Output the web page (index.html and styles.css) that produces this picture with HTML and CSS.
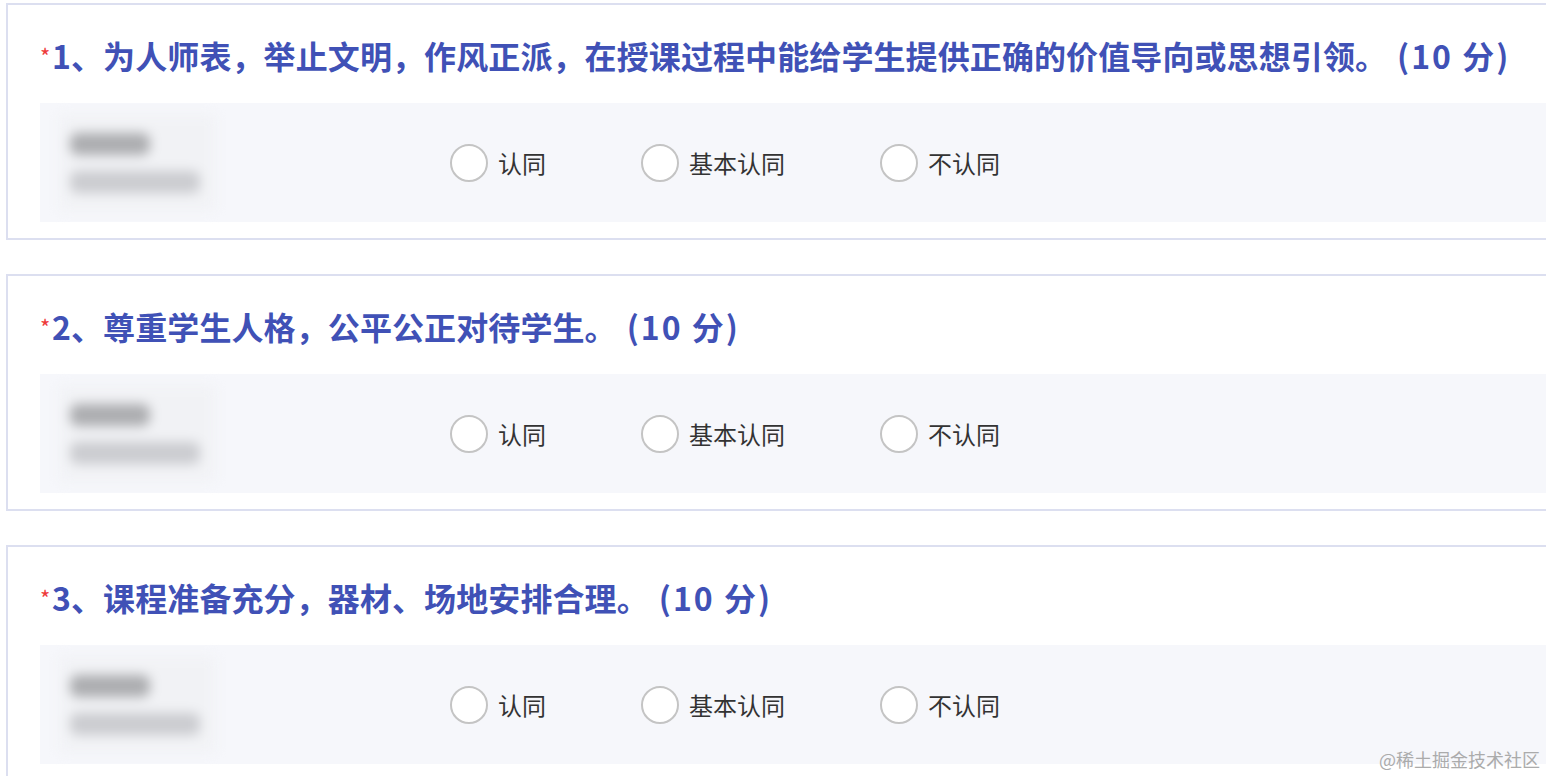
FILE: index.html
```html
<!DOCTYPE html>
<html lang="zh-CN">
<head>
<meta charset="utf-8">
<title>评价问卷</title>
<link rel="stylesheet" href="styles.css">
</head>
<body>
<div class="page">
  <section class="card">
    <h2 class="q-title"><span class="req">*</span><span>1、为人师表，举止文明，作风正派，在授课过程中能给学生提供正确的价值导向或思想引领。</span><span class="score">(10 分)</span></h2>
    <div class="q-row">
      <div class="person"><div class="blur"><div class="bar-name"></div><div class="bar-sub"></div></div></div>
      <div class="options">
        <label class="opt"><span class="radio"></span><span class="opt-text">认同</span></label>
        <label class="opt"><span class="radio"></span><span class="opt-text">基本认同</span></label>
        <label class="opt"><span class="radio"></span><span class="opt-text">不认同</span></label>
      </div>
    </div>
  </section>
  <section class="card">
    <h2 class="q-title"><span class="req">*</span><span>2、尊重学生人格，公平公正对待学生。</span><span class="score">(10 分)</span></h2>
    <div class="q-row">
      <div class="person"><div class="blur"><div class="bar-name"></div><div class="bar-sub"></div></div></div>
      <div class="options">
        <label class="opt"><span class="radio"></span><span class="opt-text">认同</span></label>
        <label class="opt"><span class="radio"></span><span class="opt-text">基本认同</span></label>
        <label class="opt"><span class="radio"></span><span class="opt-text">不认同</span></label>
      </div>
    </div>
  </section>
  <section class="card">
    <h2 class="q-title"><span class="req">*</span><span>3、课程准备充分，器材、场地安排合理。</span><span class="score">(10 分)</span></h2>
    <div class="q-row">
      <div class="person"><div class="blur"><div class="bar-name"></div><div class="bar-sub"></div></div></div>
      <div class="options">
        <label class="opt"><span class="radio"></span><span class="opt-text">认同</span></label>
        <label class="opt"><span class="radio"></span><span class="opt-text">基本认同</span></label>
        <label class="opt"><span class="radio"></span><span class="opt-text">不认同</span></label>
      </div>
    </div>
  </section>
</div>
<div class="watermark">@稀土掘金技术社区</div>
</body>
</html>
```

FILE: styles.css
```css
html, body {
  margin: 0;
  padding: 0;
  background: #ffffff;
  overflow: hidden;
  height: 776px;
}
body {
  font-family: "Noto Sans CJK SC", "Noto Sans", sans-serif;
  color: #333333;
}
.page {
  padding: 3px 0 0 6px;
  display: flex;
  flex-direction: column;
  gap: 34px;
  width: 1580px;
}
.card {
  border: 2px solid #dcdff0;
  padding: 28px 0 16px 32px;
  display: flex;
  flex-direction: column;
  gap: 26px;
}
.q-title {
  margin: 0;
  font-size: 32px;
  line-height: 44px;
  font-weight: 700;
  color: #4051b6;
  white-space: nowrap;
  display: flex;
  align-items: flex-start;
  letter-spacing: 0.1px;
}
.req {
  color: #ee3a3a;
  font-size: 22px;
  line-height: 20px;
  margin-top: 12px;
  width: 12px;
  font-weight: 400;
}
.score {
  margin-left: 10px;
  letter-spacing: 2px;
}
.q-row {
  background: #f6f7fb;
  height: 119px;
  display: flex;
  align-items: center;
}
.person {
  width: 390px;
  height: 100%;
  display: flex;
  align-items: center;
  padding-left: 20px;
}
.blur {
  width: 155px;
  height: 95px;
  background: #f1f2f5;
  filter: blur(6px);
  display: flex;
  flex-direction: column;
  justify-content: center;
  gap: 16px;
  padding-left: 10px;
  box-sizing: border-box;
}
.bar-name {
  width: 80px;
  height: 22px;
  background: #acadb0;
  border-radius: 8px;
}
.bar-sub {
  width: 130px;
  height: 22px;
  background: #cbccd0;
  border-radius: 8px;
}
.options {
  display: flex;
  align-items: center;
}
.opt {
  display: flex;
  align-items: center;
  gap: 10px;
  margin-right: 95px;
}
.radio {
  width: 34px;
  height: 34px;
  border: 2px solid #c4c4c4;
  border-radius: 50%;
  background: #ffffff;
  display: block;
}
.opt-text {
  font-size: 24px;
  line-height: 32px;
  color: #333333;
}
.watermark {
  position: absolute;
  right: 6px;
  bottom: 4px;
  font-size: 18px;
  color: #ababab;
}
```
